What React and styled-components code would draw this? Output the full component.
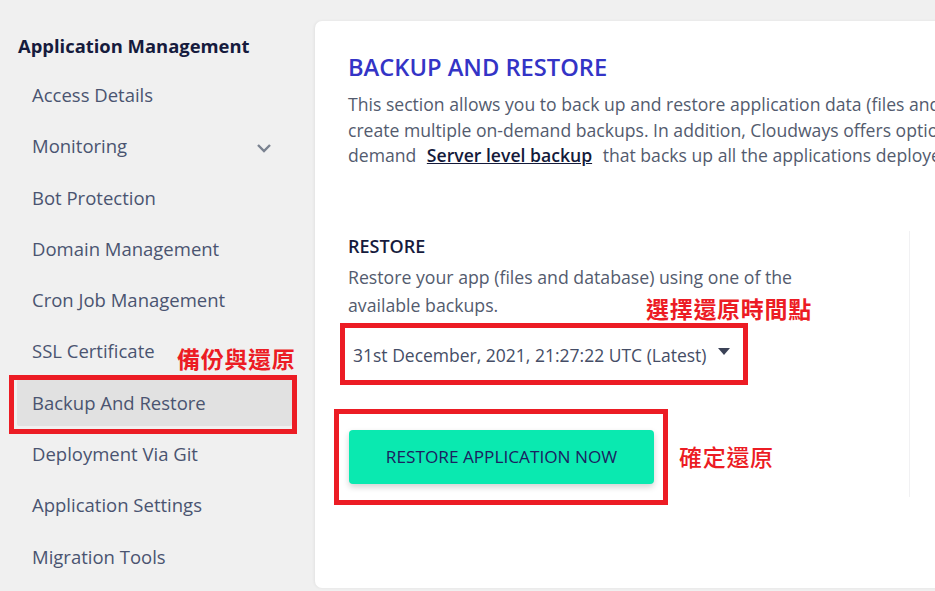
import React from 'react';
import styled, { createGlobalStyle } from 'styled-components';

const GlobalStyle = createGlobalStyle`
  html, body {
    margin: 0;
    padding: 0;
    background: #f0f0f0;
  }
  body {
    font-family: 'Open Sans', 'Noto Sans CJK TC', sans-serif;
  }
`;

const menuItems = [
  'Access Details',
  'Monitoring',
  'Bot Protection',
  'Domain Management',
  'Cron Job Management',
  'SSL Certificate',
  'Backup And Restore',
  'Deployment Via Git',
  'Application Settings',
  'Migration Tools',
];

const App = () => {
  return (
    <Page>
      <GlobalStyle />
      <Sidebar>
        <SideTitle>Application Management</SideTitle>
        <Menu>
          {menuItems.map(item => (
            <MenuItem key={item} active={item === 'Backup And Restore'}>
              {item}
              {item === 'Monitoring' && (
                <Chevron viewBox="0 0 16 12">
                  <path d="M2 3 L8 9 L14 3" />
                </Chevron>
              )}
            </MenuItem>
          ))}
        </Menu>
      </Sidebar>

      <Card>
        <Title>BACKUP AND RESTORE</Title>
        <Intro>
          This section allows you to back up and restore application data (files and database). You can
          <br />
          create multiple on-demand backups. In addition, Cloudways offers optional on-
          <br />
          demand <StrongLink>Server level backup</StrongLink> that backs up all the applications deployed on the server.
        </Intro>

        <Section>
          <RestoreColumn>
            <Label>RESTORE</Label>
            <Help>
              Restore your app (files and database) using one of the available backups.
            </Help>
            <Select>
              31st December, 2021, 21:27:22 UTC (Latest)
              <Caret />
            </Select>
            <PrimaryButton>RESTORE APPLICATION NOW</PrimaryButton>
          </RestoreColumn>
          <SideColumn />
        </Section>
      </Card>

      {/* annotation overlays */}
      <Mark style={{ left: 9, top: 375, width: 288, height: 59 }} />
      <Mark style={{ left: 340, top: 323, width: 408, height: 62 }} />
      <Mark style={{ left: 334, top: 409, width: 334, height: 96 }} />
      <Note bold style={{ left: 177, top: 345 }}>備份與還原</Note>
      <Note bold style={{ left: 646, top: 295 }}>選擇還原時間點</Note>
      <Note style={{ left: 679, top: 443 }}>確定還原</Note>
    </Page>
  );
};

export default App;

const Page = styled.div`
  position: relative;
  width: 935px;
  height: 591px;
  overflow: hidden;
  display: flex;
  align-items: flex-start;
`;

const Sidebar = styled.div`
  width: 315px;
  flex-shrink: 0;
  padding-top: 33px;
  box-sizing: border-box;
`;

const SideTitle = styled.div`
  padding-left: 18px;
  font-size: 18.4px;
  font-weight: 700;
  color: #161b3d;
  line-height: 26px;
  white-space: nowrap;
`;

const Menu = styled.div`
  margin-top: 12px;
  display: flex;
  flex-direction: column;
  gap: 4.3px;
`;

const MenuItem = styled.div`
  margin-left: 17px;
  width: 275px;
  height: 47px;
  box-sizing: border-box;
  padding: 0 20px 0 15px;
  display: flex;
  align-items: center;
  justify-content: space-between;
  font-size: 18.5px;
  color: #4a5470;
  background: ${props => (props.active ? '#e1e1e1' : 'transparent')};
  border-radius: 2px;
  white-space: nowrap;
`;

const Chevron = styled.svg`
  width: 16px;
  height: 12px;
  margin-top: 5px;
  fill: none;
  stroke: #7a8290;
  stroke-width: 2.4;
`;

const Card = styled.div`
  flex-shrink: 0;
  width: 720px;
  height: 567px;
  margin-top: 21px;
  background: #ffffff;
  border-radius: 7px;
  box-shadow: -1px 0 3px rgba(0, 0, 0, 0.06);
  padding: 32px 0 0 33px;
  box-sizing: border-box;
  overflow: hidden;
`;

const Title = styled.h1`
  margin: 0;
  font-size: 23.7px;
  font-weight: 600;
  color: #3434c6;
  line-height: 28px;
`;

const Intro = styled.p`
  margin: 11px 0 0;
  white-space: nowrap;
  font-size: 17.6px;
  line-height: 25.5px;
  color: #535b6e;
`;

const StrongLink = styled.a`
  margin: 0 6px;
  color: #141a3a;
  font-weight: 600;
  text-decoration: underline;
`;

const Section = styled.div`
  margin-top: 62px;
  display: flex;
`;

const RestoreColumn = styled.div`
  width: 561px;
  padding-top: 4px;
`;

const SideColumn = styled.div`
  width: 100px;
  height: 266px;
  border-left: 1px solid #f1f1f3;
`;

const Label = styled.div`
  font-size: 18px;
  font-weight: 600;
  color: #161b3d;
  line-height: 22px;
`;

const Help = styled.p`
  margin: 6px 0 0;
  width: 455px;
  font-size: 17.7px;
  line-height: 28.5px;
  color: #535b6e;
`;

const Select = styled.div`
  margin-top: 24px;
  margin-left: 5px;
  display: flex;
  align-items: center;
  gap: 11px;
  font-size: 17.5px;
  color: #454d66;
  height: 22px;
  white-space: nowrap;
`;

const Caret = styled.span`
  width: 0;
  height: 0;
  border-left: 6px solid transparent;
  border-right: 6px solid transparent;
  border-top: 7px solid #3b4257;
  margin-top: -6px;
`;

const PrimaryButton = styled.button`
  margin-top: 64px;
  margin-left: 1px;
  width: 305px;
  height: 54px;
  border: none;
  border-radius: 4px;
  background: #0ae9b0;
  color: #1b2160;
  font-family: 'Open Sans', sans-serif;
  font-size: 17.2px;
  font-weight: 500;
  white-space: nowrap;
  box-shadow: 0 3px 6px rgba(0, 0, 0, 0.18);
`;

const Mark = styled.div`
  position: absolute;
  border: 5px solid #ec1c24;
  box-sizing: border-box;
  pointer-events: none;
`;

const Note = styled.div`
  position: absolute;
  font-family: 'Noto Sans CJK TC', sans-serif;
  font-size: 23px;
  line-height: 26px;
  font-weight: ${props => (props.bold ? 700 : 500)};
  color: #ec1c24;
  letter-spacing: 0.7px;
`;
